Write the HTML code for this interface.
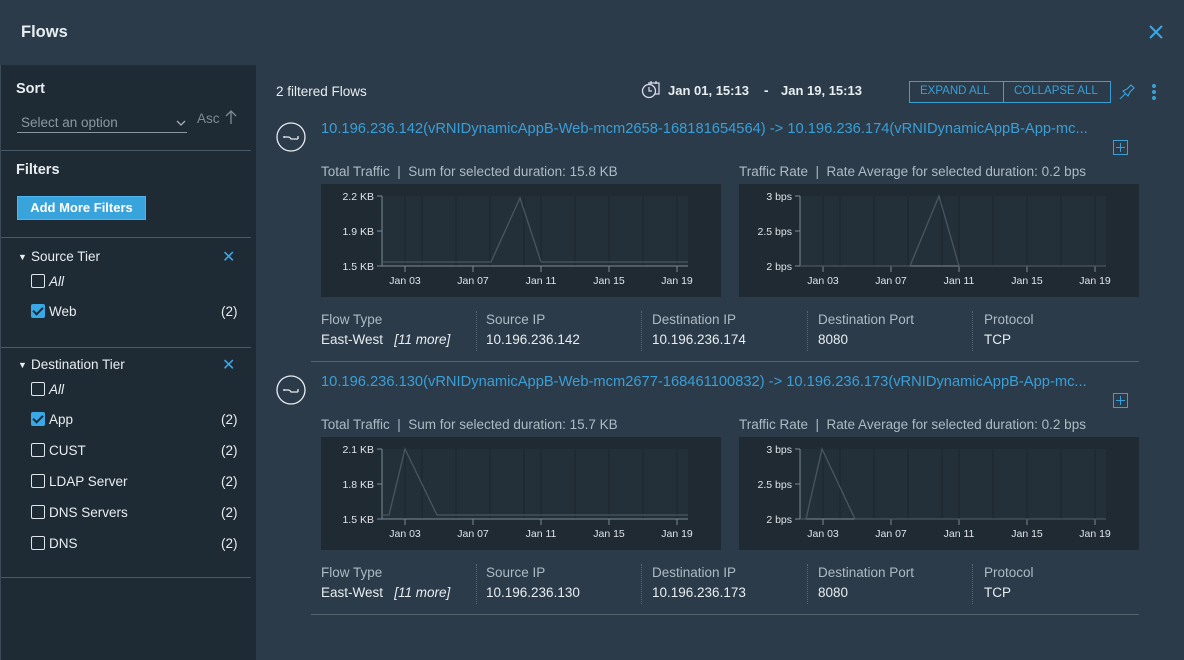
<!DOCTYPE html><html><head><style>
*{margin:0;padding:0;box-sizing:border-box}
body{width:1184px;height:660px;background:#2b3b4a;font-family:"Liberation Sans",sans-serif;color:#e8edf0;position:relative;overflow:hidden;font-size:13.5px}
.a{position:absolute;white-space:nowrap}
.g{color:#adbbc4}
.lnk{color:#3a9fd6;font-size:14.7px}
.side{position:absolute;left:0;top:65px;width:256px;height:595px;background:#1f2b34;border-left:1px solid #3a4a58}
.hr{position:absolute;left:0;width:250px;height:1px;background:#4a5a66}
.cb{position:absolute;width:14px;height:14px;border:1.5px solid #dfe6ea;border-radius:2px}
.cb.on{background:#3aa8e6;border-color:#3aa8e6}
.cb.on:after{content:"";position:absolute;left:3px;top:0px;width:4px;height:8px;border:solid #1f2b34;border-width:0 2px 2px 0;transform:rotate(45deg)}
.x{color:#3aa8e6;font-size:16px}
.div{position:absolute;border-left:1px dotted #566672;height:40px}
</style></head><body>
<div class="a" style="left:21px;top:23px;font-size:16.5px;font-weight:bold">Flows</div>
<svg class="a" style="left:1149px;top:25px" width="14" height="14"><path d="M1 1L13 13M13 1L1 13" stroke="#3aa8e6" stroke-width="2"/></svg>
<div class="side">
<div class="a" style="left:15px;top:16px;font-size:14.5px;font-weight:bold">Sort</div>
<div class="a g" style="left:20px;top:50px;color:#8a98a2">Select an option</div>
<svg class="a" style="left:175px;top:54px" width="10" height="8"><path d="M1 2L5 6L9 2" stroke="#aab" fill="none" stroke-width="1.3"/></svg>
<div class="a" style="left:16px;top:67px;width:170px;height:1px;background:#8a98a2"></div>
<div class="a" style="left:196px;top:46px;color:#7f8c95">Asc</div>
<svg class="a" style="left:224px;top:45px" width="12" height="14"><path d="M6 14V1M1 6L6 1L11 6" stroke="#7f8c95" fill="none" stroke-width="1.3"/></svg>
<div class="hr" style="top:85px"></div>
<div class="a" style="left:15px;top:97px;font-size:14.5px;font-weight:bold">Filters</div>
<div class="a" style="left:16px;top:131px;width:129px;height:24px;background:#39a4dc;border:1px solid #4cb4ee;color:#fff;font-weight:bold;font-size:13px;text-align:center;line-height:22px">Add More Filters</div>
<div class="hr" style="top:172px"></div>
<div class="a" style="left:17px;top:187px;font-size:9px">▼</div><div class="a" style="left:30px;top:184px">Source Tier</div><div class="a x" style="left:221px;top:182px">✕</div>
<div class="cb" style="left:30px;top:209px"></div><div class="a" style="left:48px;top:209px;font-style:italic">All</div>
<div class="cb on" style="left:30px;top:239px"></div><div class="a" style="left:48px;top:239px">Web</div><div class="a" style="left:220px;top:239px">(2)</div>
<div class="hr" style="top:282px"></div>
<div class="a" style="left:17px;top:295px;font-size:9px">▼</div><div class="a" style="left:30px;top:292px">Destination Tier</div><div class="a x" style="left:221px;top:290px">✕</div>
<div class="cb" style="left:30px;top:317px"></div><div class="a" style="left:48px;top:317px;font-style:italic">All</div>
<div class="cb on" style="left:30px;top:347px"></div><div class="a" style="left:48px;top:347px">App</div><div class="a" style="left:220px;top:347px">(2)</div>
<div class="cb" style="left:30px;top:378px"></div><div class="a" style="left:48px;top:378px">CUST</div><div class="a" style="left:220px;top:378px">(2)</div>
<div class="cb" style="left:30px;top:409px"></div><div class="a" style="left:48px;top:409px">LDAP Server</div><div class="a" style="left:220px;top:409px">(2)</div>
<div class="cb" style="left:30px;top:440px"></div><div class="a" style="left:48px;top:440px">DNS Servers</div><div class="a" style="left:220px;top:440px">(2)</div>
<div class="cb" style="left:30px;top:471px"></div><div class="a" style="left:48px;top:471px">DNS</div><div class="a" style="left:220px;top:471px">(2)</div>
<div class="hr" style="top:512px"></div>
</div>
<div class="a" style="left:276px;top:84px">2 filtered Flows</div>
<svg class="a" style="left:641px;top:80px" width="20" height="19"><circle cx="8" cy="11" r="6.5" stroke="#dde" fill="none" stroke-width="1.3"/><path d="M8 7V11H11M7 3H18V14H14M10 1V4M15 1V4" stroke="#dde" fill="none" stroke-width="1.2"/></svg>
<div class="a" style="left:668px;top:83px;font-weight:bold;font-size:13px">Jan 01, 15:13</div>
<div class="a" style="left:764px;top:83px;font-weight:bold">-</div>
<div class="a" style="left:781px;top:83px;font-weight:bold;font-size:13px">Jan 19, 15:13</div>
<div class="a" style="left:909px;top:81px;width:202px;height:22px;border:1px solid #3a9fd6"></div>
<div class="a" style="left:1003px;top:81px;width:1px;height:22px;background:#3a9fd6"></div>
<div class="a" style="left:920px;top:85px;color:#3a9fd6;font-size:11.5px;line-height:13px">EXPAND ALL</div>
<div class="a" style="left:1014px;top:85px;color:#3a9fd6;font-size:11.5px;line-height:13px">COLLAPSE ALL</div>
<svg class="a" style="left:1118px;top:83px" width="18" height="18"><path d="M2 16L7 11M5 8L10 13L12 9L16 5L13 2L9 6Z" stroke="#3a9fd6" fill="none" stroke-width="1.2"/></svg>
<div class="a" style="left:1152px;top:84px;width:4px;height:4px;border-radius:2px;background:#3a9fd6;box-shadow:0 6px #3a9fd6,0 12px #3a9fd6"></div>

<svg class="a" style="left:276px;top:122px" width="30" height="30"><circle cx="15" cy="15" r="14" stroke="#e8edf0" fill="none" stroke-width="1.3"/><path d="M8 15H12Q14 15 15 17H22M8 14v2M22 14v3" stroke="#e8edf0" fill="none" stroke-width="1.3"/></svg>
<div class="a lnk" style="left:321px;top:121px">10.196.236.142(vRNIDynamicAppB-Web-mcm2658-168181654564) -&gt; 10.196.236.174(vRNIDynamicAppB-App-mc...</div>
<svg class="a" style="left:1113px;top:140px" width="16" height="16"><rect x=".5" y=".5" width="14" height="14" fill="none" stroke="#3a9fd6"/><path d="M7.5 3V12M3 7.5H12" stroke="#3a9fd6"/></svg>
<div class="a g" style="left:321px;top:164px">Total Traffic &nbsp;| &nbsp;Sum for selected duration: 15.8 KB</div>
<div class="a g" style="left:739px;top:164px">Traffic Rate &nbsp;| &nbsp;Rate Average for selected duration: 0.2 bps</div>

<svg class="a" style="left:276px;top:375px" width="30" height="30"><circle cx="15" cy="15" r="14" stroke="#e8edf0" fill="none" stroke-width="1.3"/><path d="M8 15H12Q14 15 15 17H22M8 14v2M22 14v3" stroke="#e8edf0" fill="none" stroke-width="1.3"/></svg>
<div class="a lnk" style="left:321px;top:374px">10.196.236.130(vRNIDynamicAppB-Web-mcm2677-168461100832) -&gt; 10.196.236.173(vRNIDynamicAppB-App-mc...</div>
<svg class="a" style="left:1113px;top:393px" width="16" height="16"><rect x=".5" y=".5" width="14" height="14" fill="none" stroke="#3a9fd6"/><path d="M7.5 3V12M3 7.5H12" stroke="#3a9fd6"/></svg>
<div class="a g" style="left:321px;top:417px">Total Traffic &nbsp;| &nbsp;Sum for selected duration: 15.7 KB</div>
<div class="a g" style="left:739px;top:417px">Traffic Rate &nbsp;| &nbsp;Rate Average for selected duration: 0.2 bps</div>

<svg class="a" style="left:0;top:0" width="1184" height="660" font-family="Liberation Sans" font-size="10.5" fill="#dfe5ea">
<defs>
<g id="grid"><rect width="400" height="113" fill="#1f2a33"/><rect x="61" y="12" width="306" height="70" fill="#243039"/>
<g stroke="#1a242c"><path d="M84 12V82M101 12V82M135 12V82M169 12V82M203 12V82M220 12V82M254 12V82M288 12V82M322 12V82M356 12V82"/></g>
<path d="M61 12V82H367" stroke="#7d8b96" fill="none"/>
<g stroke="#7d8b96"><path d="M56 12H61M56 47H61M56 82H61M84 82V88M152 82V88M220 82V88M288 82V88M356 82V88"/></g>
<g text-anchor="middle"><text x="84" y="100">Jan 03</text><text x="152" y="100">Jan 07</text><text x="220" y="100">Jan 11</text><text x="288" y="100">Jan 15</text><text x="356" y="100">Jan 19</text></g>
</g></defs>
<g transform="translate(321,184)"><use href="#grid"/><g text-anchor="end"><text x="53" y="16">2.2 KB</text><text x="53" y="51">1.9 KB</text><text x="53" y="86">1.5 KB</text></g>
<path d="M61 78H170L199 14L220 78H367" stroke="#4a5560" fill="none" stroke-width="1.3"/></g>
<g transform="translate(739,184)"><use href="#grid"/><g text-anchor="end"><text x="53" y="16">3 bps</text><text x="53" y="51">2.5 bps</text><text x="53" y="86">2 bps</text></g>
<path d="M61 82H171L200 12L220 82H367" stroke="#4a5560" fill="none" stroke-width="1.3"/></g>
<g transform="translate(321,437)"><use href="#grid"/><g text-anchor="end"><text x="53" y="16">2.1 KB</text><text x="53" y="51">1.8 KB</text><text x="53" y="86">1.5 KB</text></g>
<path d="M61 78H68L84 12L116 78H367" stroke="#4a5560" fill="none" stroke-width="1.3"/></g>
<g transform="translate(739,437)"><use href="#grid"/><g text-anchor="end"><text x="53" y="16">3 bps</text><text x="53" y="51">2.5 bps</text><text x="53" y="86">2 bps</text></g>
<path d="M61 82H67L83 12L116 82H367" stroke="#4a5560" fill="none" stroke-width="1.3"/></g>
</svg>

<div class="a g" style="left:321px;top:312px">Flow Type</div><div class="a" style="left:321px;top:332px">East-West &nbsp;&nbsp;<i>[11 more]</i></div>
<div class="div" style="left:476px;top:311px"></div>
<div class="a g" style="left:486px;top:312px">Source IP</div><div class="a" style="left:486px;top:332px">10.196.236.142</div>
<div class="div" style="left:641px;top:311px"></div>
<div class="a g" style="left:652px;top:312px">Destination IP</div><div class="a" style="left:652px;top:332px">10.196.236.174</div>
<div class="div" style="left:807px;top:311px"></div>
<div class="a g" style="left:818px;top:312px">Destination Port</div><div class="a" style="left:818px;top:332px">8080</div>
<div class="div" style="left:972px;top:311px"></div>
<div class="a g" style="left:984px;top:312px">Protocol</div><div class="a" style="left:984px;top:332px">TCP</div>
<div class="a" style="left:311px;top:361px;width:828px;height:1px;background:#56646f"></div>

<div class="a g" style="left:321px;top:565px">Flow Type</div><div class="a" style="left:321px;top:585px">East-West &nbsp;&nbsp;<i>[11 more]</i></div>
<div class="div" style="left:476px;top:564px"></div>
<div class="a g" style="left:486px;top:565px">Source IP</div><div class="a" style="left:486px;top:585px">10.196.236.130</div>
<div class="div" style="left:641px;top:564px"></div>
<div class="a g" style="left:652px;top:565px">Destination IP</div><div class="a" style="left:652px;top:585px">10.196.236.173</div>
<div class="div" style="left:807px;top:564px"></div>
<div class="a g" style="left:818px;top:565px">Destination Port</div><div class="a" style="left:818px;top:585px">8080</div>
<div class="div" style="left:972px;top:564px"></div>
<div class="a g" style="left:984px;top:565px">Protocol</div><div class="a" style="left:984px;top:585px">TCP</div>
<div class="a" style="left:311px;top:614px;width:828px;height:1px;background:#56646f"></div>
</body></html>
